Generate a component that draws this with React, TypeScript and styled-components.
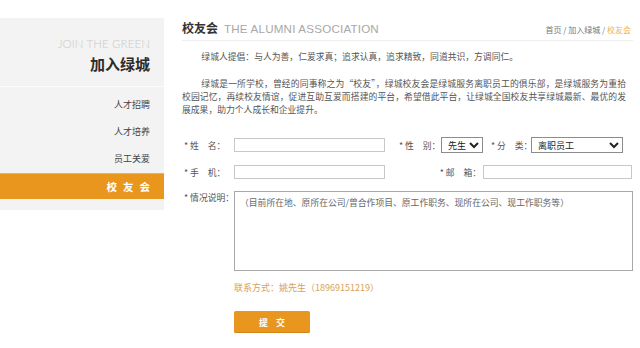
import React from "react";
import styled, { createGlobalStyle } from "styled-components";

const GlobalStyle = createGlobalStyle`
  html, body {
    margin: 0;
    padding: 0;
    background: #ffffff;
  }
  body {
    font-family: "Liberation Sans", "Noto Sans CJK SC", sans-serif;
    color: #555;
  }
`;

const orange = "#e8961e";

const Page = styled.div`
  display: flex;
  align-items: flex-start;
  width: 640px;
  height: 348px;
  overflow: hidden;
`;

const Sidebar = styled.aside`
  width: 164px;
  margin-top: 18px;
  background: #f3f3f3;
  padding-bottom: 11px;
`;

const SideHead = styled.div`
  display: flex;
  flex-direction: column;
  align-items: flex-end;
  padding: 19px 14px 11px 0;
  border-bottom: 1px solid #fbfbfb;
`;

const SideEn = styled.div`
  font-family: "Lato", "Liberation Sans", sans-serif;
  font-weight: 300;
  font-size: 11.5px;
  color: #c9c9c9;
  letter-spacing: 0.1px;
  line-height: 14px;
`;

const SideTitle = styled.div`
  font-family: "Noto Sans CJK SC", sans-serif;
  font-weight: 700;
  font-size: 15px;
  line-height: 22px;
  color: #2b2b2b;
  margin-top: 2px;
`;

const Menu = styled.ul`
  list-style: none;
  margin: 0;
  padding: 4px 0 0;
`;

const MenuItem = styled.li<{ $active?: boolean }>`
  height: ${(p) => (p.$active ? "26px" : "27px")};
  display: flex;
  align-items: center;
  justify-content: flex-end;
  padding-right: 14px;
  font-family: "Noto Sans CJK SC", sans-serif;
  font-size: ${(p) => (p.$active ? "10.5px" : "9px")};
  font-weight: ${(p) => (p.$active ? 700 : 400)};
  letter-spacing: ${(p) => (p.$active ? "6px" : "0")};
  margin-right: ${(p) => (p.$active ? "-6px" : "0")};
  color: ${(p) => (p.$active ? "#fff" : "#444")};
  background: ${(p) => (p.$active ? orange : "transparent")};
  box-shadow: ${(p) => (p.$active ? "inset 0 1px 0 #f0b04f" : "none")};
`;

const ActiveWrap = styled.div`
  margin-top: 1px;
  overflow: hidden;
`;

const Main = styled.main`
  width: 451px;
  margin-left: 18px;
  padding-top: 20px;
`;

const Header = styled.div`
  display: flex;
  align-items: baseline;
  justify-content: space-between;
  padding-bottom: 4px;
  border-bottom: 1px solid #eeeeee;
`;

const TitleGroup = styled.div`
  display: flex;
  align-items: baseline;
  gap: 6px;
`;

const Title = styled.h1`
  margin: 0;
  font-family: "Noto Sans CJK SC", sans-serif;
  font-weight: 700;
  font-size: 12px;
  line-height: 16px;
  color: #333;
`;

const TitleEn = styled.span`
  font-family: "Liberation Sans", sans-serif;
  font-size: 11.6px;
  color: #a8a8a8;
  letter-spacing: 0.2px;
`;

const Crumbs = styled.div`
  font-family: "Noto Sans CJK SC", sans-serif;
  font-size: 8px;
  color: #777;
  margin-right: 2px;
`;

const CrumbNow = styled.span`
  color: #efb25a;
`;

const Body = styled.div`
  width: 444px;
  padding-top: 9px;
`;

const Para = styled.p`
  margin: 0 0 14px;
  font-family: "Noto Sans CJK SC", sans-serif;
  font-size: 8.8px;
  line-height: 13px;
  color: #555;
  text-indent: 2.2em;
  text-align: justify;
`;

const Form = styled.form`
  display: flex;
  flex-direction: column;
  gap: 12px;
  margin-top: 21px;
`;

const Row = styled.div`
  display: flex;
  align-items: center;
`;

const Label = styled.label<{ $w: number }>`
  width: ${(p) => p.$w}px;
  flex: none;
  font-family: "Noto Sans CJK SC", sans-serif;
  font-size: 8.8px;
  color: #555;
  white-space: pre;
  text-align: right;
  padding-right: 2px;
  box-sizing: border-box;
`;

const LeftLabel = styled(Label)`
  text-align: left;
  padding-left: 2px;
`;

const TextInput = styled.input<{ $w: number }>`
  width: ${(p) => p.$w}px;
  height: 14px;
  box-sizing: border-box;
  border: 1px solid #c8c8c8;
  padding: 0 3px;
  margin: 0;
  font-size: 9px;
  outline: none;
`;

const Select = styled.select<{ $w: number }>`
  width: ${(p) => p.$w}px;
  height: 16px;
  box-sizing: border-box;
  border: 1px solid #8c8c8c;
  border-radius: 0;
  padding: 0 0 0 2px;
  margin: 0;
  font-family: "Noto Sans CJK SC", sans-serif;
  font-size: 9px;
  color: #222;
  background: #fff;
`;

const TextArea = styled.textarea`
  width: 399px;
  height: 80px;
  box-sizing: border-box;
  border: 1px solid #a8a8a8;
  padding: 5px 5px;
  margin: 0;
  resize: none;
  font-family: "Noto Sans CJK SC", sans-serif;
  font-size: 8.8px;
  line-height: 12px;
  color: #666;
  &::placeholder {
    color: #666;
  }
`;

const TopRow = styled(Row)`
  align-items: flex-start;
`;

const Indented = styled.div`
  padding-left: 52px;
`;

const Contact = styled.div`
  font-family: "Noto Sans CJK SC", sans-serif;
  font-size: 9px;
  color: #d9a059;
  margin-top: -1px;
  line-height: 12px;
`;

const Submit = styled.button`
  margin-top: 17px;
  width: 76px;
  height: 22px;
  border: none;
  border-radius: 2px;
  background: ${orange};
  color: #fff;
  font-family: "Noto Sans CJK SC", sans-serif;
  font-size: 9px;
  font-weight: 700;
  letter-spacing: 8px;
  padding: 0 0 0 8px;
  box-shadow: inset 0 -1px 0 #d4841a;
`;

const Gap = styled.span<{ $w: number }>`
  display: inline-block;
  width: ${(p) => p.$w}px;
  flex: none;
`;

export default function App() {
  return (
    <>
      <GlobalStyle />
      <Page>
        <Sidebar>
          <SideHead>
            <SideEn>JOIN THE GREEN</SideEn>
            <SideTitle>加入绿城</SideTitle>
          </SideHead>
          <Menu>
            <MenuItem>人才招聘</MenuItem>
            <MenuItem>人才培养</MenuItem>
            <MenuItem>员工关爱</MenuItem>
            <ActiveWrap>
              <MenuItem $active>校友会</MenuItem>
            </ActiveWrap>
          </Menu>
        </Sidebar>
        <Main>
          <Header>
            <TitleGroup>
              <Title>校友会</Title>
              <TitleEn>THE ALUMNI ASSOCIATION</TitleEn>
            </TitleGroup>
            <Crumbs>
              首页 / 加入绿城 / <CrumbNow>校友会</CrumbNow>
            </Crumbs>
          </Header>
          <Body>
            <Para>绿城人提倡：与人为善，仁爱求真；追求认真，追求精致，同道共识，方调同仁。</Para>
            <Para>
              绿城是一所学校，曾经的同事称之为“校友”，绿城校友会是绿城服务离职员工的俱乐部，是绿城服务为重拾校园记忆，再续校友情谊，促进互助互爱而搭建的平台，希望借此平台，让绿城全国校友共享绿城最新、最优的发展成果，助力个人成长和企业提升。
            </Para>
          </Body>
          <Form onSubmit={(e) => e.preventDefault()}>
            <Row>
              <LeftLabel $w={52}>{"* 姓　名："}</LeftLabel>
              <TextInput $w={151} />
              <Gap $w={12} />
              <LeftLabel $w={44}>{"* 性　别："}</LeftLabel>
              <Select $w={42} defaultValue="先生">
                <option>先生</option>
                <option>女士</option>
              </Select>
              <Gap $w={6} />
              <LeftLabel $w={42}>{"* 分　类："}</LeftLabel>
              <Select $w={92} defaultValue="离职员工">
                <option>离职员工</option>
                <option>合作伙伴</option>
              </Select>
            </Row>
            <Row>
              <LeftLabel $w={52}>{"* 手　机："}</LeftLabel>
              <TextInput $w={151} />
              <Label $w={98}>{"* 邮　箱："}</Label>
              <TextInput $w={149} />
            </Row>
            <TopRow>
              <LeftLabel $w={52}>{"* 情况说明："}</LeftLabel>
              <TextArea placeholder="（目前所在地、原所在公司/曾合作项目、原工作职务、现所在公司、现工作职务等）" />
            </TopRow>
            <Indented>
              <Contact>联系方式：姚先生（18969151219）</Contact>
              <Submit type="submit">提交</Submit>
            </Indented>
          </Form>
        </Main>
      </Page>
    </>
  );
}
